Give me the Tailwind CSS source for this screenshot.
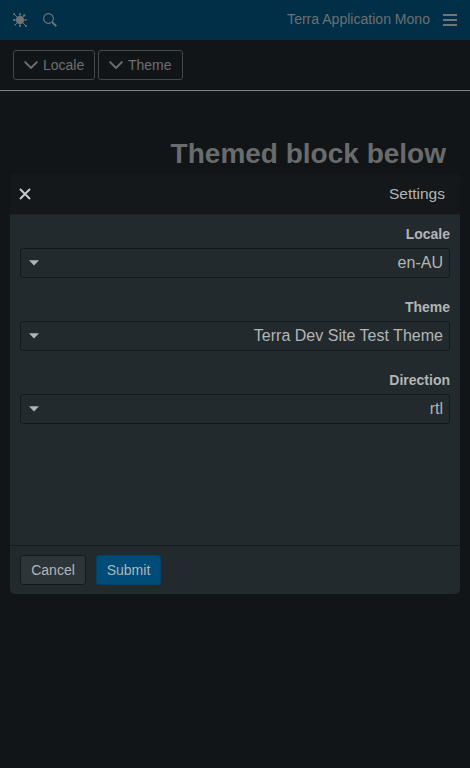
<!DOCTYPE html>
<html lang="en-AU">
<head>
<meta charset="utf-8">
<title>Terra Application Mono</title>
<script src="https://cdn.jsdelivr.net/npm/@tailwindcss/browser@4"></script>
</head>
<body class="relative h-[768px] overflow-hidden bg-[#111518] font-['Liberation_Sans',Arial,sans-serif] text-sm text-[#6d6f70]">
  <header class="flex h-10 items-center justify-between bg-[#002f47] pr-[13px] pl-[13px]">
    <div class="flex items-center gap-4">
      <svg class="size-3.5" viewBox="0 0 14 14" fill="#727576" stroke="#727576" stroke-linecap="round">
        <circle cx="7" cy="7" r="4" stroke="none"/>
        <path d="M7 7V1.2M7 7V13M7 7H1M7 7H13M7 7L1.2 1.2M7 7L13 13M7 7L11.2 2.2M7 7L2.5 11.5" stroke-width="1"/>
        <g stroke="none"><circle cx="1" cy="1" r="1"/><circle cx="7" cy=".9" r=".9"/><circle cx="11.3" cy="2.4" r="1.2"/><circle cx="1" cy="7" r="1"/><circle cx="13" cy="6.8" r=".8"/><circle cx="2.3" cy="11.6" r=".9"/><circle cx="7" cy="13" r="1"/><circle cx="13" cy="13" r="1"/></g>
      </svg>
      <svg class="size-3.5" viewBox="0 0 14 14" fill="none" stroke="#727576"><circle cx="5.5" cy="5.5" r="4.9" stroke-width="1.1"/><path d="M9.1 9.1L13.3 13.2" stroke-width="1.9"/></svg>
    </div>
    <div class="flex items-center gap-[13px]">
      <span class="-mt-0.5 text-[14.05px]">Terra Application Mono</span>
      <svg class="h-3 w-3.5" viewBox="0 0 14 12" fill="#727576"><path d="M0 0h14v2H0zM0 5h14v2H0zM0 10h14v2H0z"/></svg>
    </div>
  </header>
  <div class="flex h-[51px] gap-[3px] border-b border-[#808283] pt-2.5 pl-[13px]">
    <button class="flex h-[30px] w-[82px] items-center gap-[5px] rounded-[3px] border border-[#44484a] pl-2.5">
      <svg class="h-2 w-3.5" viewBox="0 0 14 8" fill="none" stroke="currentColor" stroke-width="1.9"><path d="M.6.6L7 7L13.4.6"/></svg>Locale
    </button>
    <button class="flex h-[30px] w-[85px] items-center gap-[5px] rounded-[3px] border border-[#44484a] pl-2.5">
      <svg class="h-2 w-3.5" viewBox="0 0 14 8" fill="none" stroke="currentColor" stroke-width="1.9"><path d="M.6.6L7 7L13.4.6"/></svg>Theme
    </button>
  </div>
  <h1 class="mt-[47px] pr-6 text-right text-[28px] leading-8 font-bold text-[#6a6b6b]">Themed block below</h1>

  <section role="dialog" class="absolute top-[174px] left-2.5 flex h-[420px] w-[450px] flex-col overflow-hidden rounded-[5px] bg-[#232a2d] text-[#b2b5b6]">
    <div class="flex h-[41px] items-center justify-between border-b border-[#1b2023] bg-[#14181a] pr-[15px] pl-[9px]">
      <svg class="size-3" viewBox="0 0 12 12" stroke="#c9cacb" stroke-width="1.9"><path d="M1 1L11 11M11 1L1 11"/></svg>
      <h2 class="text-[15.5px] leading-5">Settings</h2>
    </div>
    <div class="flex flex-1 flex-col gap-[23px] px-2.5 pt-[9px]">
      <div>
        <div class="h-5 text-right leading-5 font-bold">Locale</div>
        <div class="mt-1 flex h-[30px] items-center justify-between rounded-[3px] border border-[#15191b] pr-1.5 pl-2 text-base leading-5">
          <svg class="h-1.5 w-2.5" viewBox="0 0 10 6" fill="currentColor"><path d="M0 .3H10L5 5.5z"/></svg><span class="mb-0.5 text-[16.05px]">en-AU</span>
        </div>
      </div>
      <div class="-mt-1">
        <div class="h-5 text-right leading-5 font-bold">Theme</div>
        <div class="mt-1 flex h-[30px] items-center justify-between rounded-[3px] border border-[#15191b] pr-1.5 pl-2 text-base leading-5">
          <svg class="h-1.5 w-2.5" viewBox="0 0 10 6" fill="currentColor"><path d="M0 .3H10L5 5.5z"/></svg><span class="mb-0.5 text-[16.05px]">Terra Dev Site Test Theme</span>
        </div>
      </div>
      <div class="-mt-1">
        <div class="h-5 text-right leading-5 font-bold">Direction</div>
        <div class="mt-1 flex h-[30px] items-center justify-between rounded-[3px] border border-[#15191b] pr-1.5 pl-2 text-base leading-5">
          <svg class="h-1.5 w-2.5" viewBox="0 0 10 6" fill="currentColor"><path d="M0 .3H10L5 5.5z"/></svg><span class="mb-0.5 text-[16.05px]">rtl</span>
        </div>
      </div>
    </div>
    <footer class="flex h-[49px] gap-2.5 border-t border-[#15191b] px-2.5 pt-[9px]">
      <button class="h-[30px] w-[66px] rounded-[3px] border border-[#15191b] bg-[#2e3538]">Cancel</button>
      <button class="h-[30px] w-[65px] rounded-[3px] border border-[#00426a] bg-[#004c78]">Submit</button>
    </footer>
  </section>
</body>
</html>
